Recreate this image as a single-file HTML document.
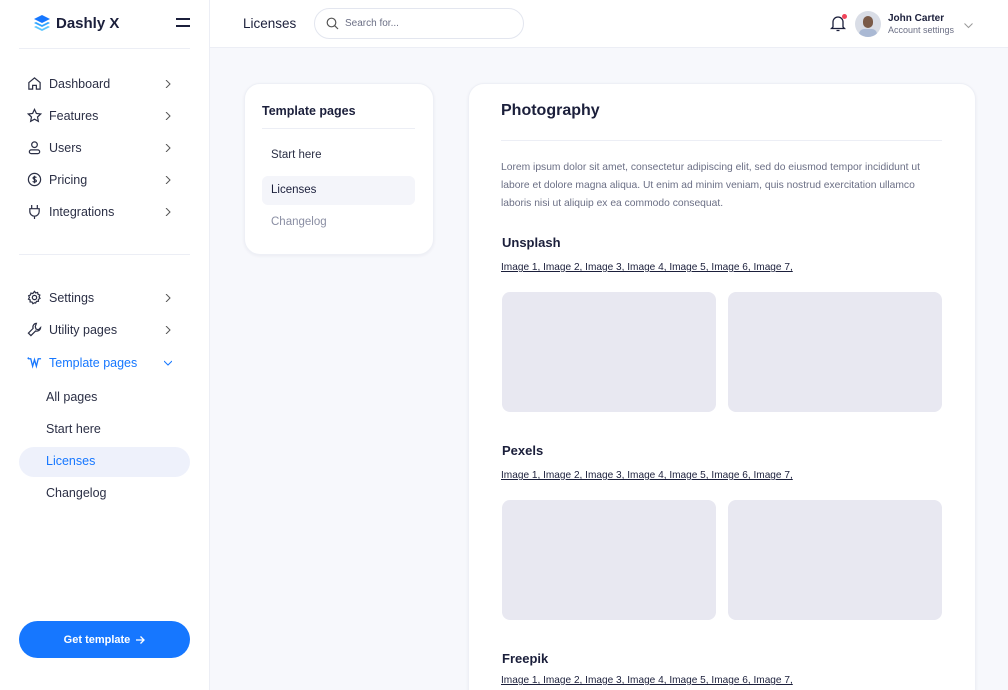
<!DOCTYPE html>
<html style="overflow:hidden;height:690px"><head><meta charset="utf-8"><style>
*{box-sizing:border-box;margin:0;padding:0}
body{width:1008px;height:690px;overflow:hidden;font-family:"Liberation Sans",sans-serif;background:#f7f8fc;color:#1b1f3b;position:relative}
.side{position:absolute;left:0;top:0;width:210px;height:690px;background:#fff;border-right:1px solid #eceef5}
.logo{position:absolute;left:33px;top:14px;display:flex;align-items:center;gap:5px;font-weight:bold;font-size:15px;color:#1b1f3b}
.ham{position:absolute;left:176px;top:18px;width:14px}
.ham i{display:block;height:2px;background:#1b1f3b;margin-bottom:5px}
.hr{position:absolute;left:19px;width:171px;height:1px;background:#eceef5}
.nav{position:absolute;left:27px;display:flex;align-items:center;font-size:12.5px;color:#2b2f45;width:152px}
.nav svg{width:15px;height:15px;margin-right:7px;flex:none}
.nav .ch{position:absolute;right:0;width:8px;height:8px}
.sub{position:absolute;left:46px;font-size:12.5px;color:#2b2f45}
.act{position:absolute;left:19px;top:447px;width:171px;height:30px;background:#eef1fb;border-radius:15px}
.btn{position:absolute;left:19px;top:621px;width:171px;height:37px;background:#1677ff;border-radius:19px;color:#fff;font-size:11px;font-weight:bold;display:flex;align-items:center;justify-content:center;gap:5px}
.top{position:absolute;left:210px;top:0;width:798px;height:48px;background:#fff;border-bottom:1px solid #eceef5}
.card{position:absolute;background:#fff;border-radius:16px;box-shadow:0 1px 3px rgba(30,40,80,.06);border:1px solid #eef0f6}
.img{position:absolute;width:214px;height:120px;background:#e8e8f1;border-radius:8px}
.h3{position:absolute;left:502px;font-size:13px;font-weight:bold}
.links{position:absolute;left:501px;font-size:10.1px;color:#1b1f3b;text-decoration:underline;white-space:nowrap}
</style></head><body>
<div class="side">
 <div class="logo"><svg width="18" height="18" viewBox="0 0 18 18"><path d="M9 1l8 4-8 4-8-4z" fill="#1677ff"/><path d="M1 9l8 4 8-4-2-1-6 3-6-3z" fill="#2fa4ff"/><path d="M1 13l8 4 8-4-2-1-6 3-6-3z" fill="#5bc6ff"/></svg>Dashly X</div>
 <div class="ham"><i></i><i></i></div>
 <div class="hr" style="top:48px"></div>
 <div class="hr" style="top:254px"></div>
 <div class="nav" style="top:76px"><svg viewBox="0 0 16 16" fill="none" stroke="#2b2f45" stroke-width="1.3"><path d="M2 7l6-5 6 5v7h-4v-4H6v4H2z"/></svg>Dashboard<svg class="ch" viewBox="0 0 8 8" fill="none" stroke="#555" stroke-width="1"><path d="M2 0l4 4-4 4"/></svg></div>
 <div class="nav" style="top:108px"><svg viewBox="0 0 16 16" fill="none" stroke="#2b2f45" stroke-width="1.3"><path d="M8 1.5l2 4.3 4.6.6-3.4 3.2.9 4.6L8 12l-4.1 2.2.9-4.6L1.4 6.4 6 5.8z"/></svg>Features<svg class="ch" viewBox="0 0 8 8" fill="none" stroke="#555" stroke-width="1"><path d="M2 0l4 4-4 4"/></svg></div>
 <div class="nav" style="top:140px"><svg viewBox="0 0 16 16" fill="none" stroke="#2b2f45" stroke-width="1.3"><circle cx="8" cy="5" r="3"/><rect x="2.5" y="10.5" width="11" height="4" rx="2"/></svg>Users<svg class="ch" viewBox="0 0 8 8" fill="none" stroke="#555" stroke-width="1"><path d="M2 0l4 4-4 4"/></svg></div>
 <div class="nav" style="top:172px"><svg viewBox="0 0 16 16" fill="none" stroke="#2b2f45" stroke-width="1.3"><circle cx="8" cy="8" r="6.5"/><path d="M10 6c-.5-1-3.5-1-3.5.5S10 8 10 9.5 7 11 6 10M8 4v8"/></svg>Pricing<svg class="ch" viewBox="0 0 8 8" fill="none" stroke="#555" stroke-width="1"><path d="M2 0l4 4-4 4"/></svg></div>
 <div class="nav" style="top:204px"><svg viewBox="0 0 16 16" fill="none" stroke="#2b2f45" stroke-width="1.3"><path d="M5 1v4M11 1v4M3 5h10v3a5 5 0 0 1-10 0zM8 13v3"/></svg>Integrations<svg class="ch" viewBox="0 0 8 8" fill="none" stroke="#555" stroke-width="1"><path d="M2 0l4 4-4 4"/></svg></div>
 <div class="nav" style="top:290px"><svg viewBox="0 0 16 16" fill="none" stroke="#2b2f45" stroke-width="1.3"><circle cx="8" cy="8" r="2.3"/><path d="M8 1.5l1.3 1.6 2-.5.5 2 1.9.8-.8 1.9 1 1.7-1.8 1 .1 2-2 .1-1 1.8L8 13.6l-1.7 1-1-1.8-2-.1.1-2-1.8-1 1-1.7-.8-1.9 1.9-.8.5-2 2 .5z"/></svg>Settings<svg class="ch" viewBox="0 0 8 8" fill="none" stroke="#555" stroke-width="1"><path d="M2 0l4 4-4 4"/></svg></div>
 <div class="nav" style="top:322px"><svg viewBox="0 0 16 16" fill="none" stroke="#2b2f45" stroke-width="1.3"><path d="M10 1.5a4 4 0 0 0-3.5 5.3L1.5 11.8l2.7 2.7 5-5A4 4 0 0 0 14.5 6l-2.3 2.3-2.6-.8-.8-2.6z"/></svg>Utility pages<svg class="ch" viewBox="0 0 8 8" fill="none" stroke="#555" stroke-width="1"><path d="M2 0l4 4-4 4"/></svg></div>
 <div class="nav" style="top:355px;color:#1677ff"><svg viewBox="0 0 16 16" fill="none" stroke="#1677ff" stroke-width="1.4"><path d="M1 4h3l2 8 2-7 2 7 2-8h3M1 4c0-1 1-1 1-1"/></svg>Template pages<svg class="ch" viewBox="0 0 8 8" fill="none" stroke="#1677ff" stroke-width="1"><path d="M0 2l4 4 4-4"/></svg></div>
 <div class="sub" style="top:390px">All pages</div>
 <div class="sub" style="top:422px">Start here</div>
 <div class="act"></div>
 <div class="sub" style="top:454px;color:#1677ff">Licenses</div>
 <div class="sub" style="top:486px">Changelog</div>
 <div class="btn">Get template <svg width="10" height="10" viewBox="0 0 10 10" fill="none" stroke="#fff" stroke-width="1.3"><path d="M1 5h8M5.5 1.5L9 5 5.5 8.5"/></svg></div>
</div>
<div class="top">
 <div style="position:absolute;left:33px;top:16px;font-size:13.5px">Licenses</div>
 <div style="position:absolute;left:104px;top:8px;width:210px;height:31px;border:1px solid #e3e6ef;border-radius:16px;font-size:10px;color:#6b6f85;padding:9px 0 0 30px">
  <svg style="position:absolute;left:11px;top:8px" width="13" height="13" viewBox="0 0 13 13" fill="none" stroke="#555" stroke-width="1.2"><circle cx="5.5" cy="5.5" r="4.3"/><path d="M8.7 8.7L12 12"/></svg>Search for...</div>
 <svg style="position:absolute;left:620px;top:15px" width="16" height="17" viewBox="0 0 16 17" fill="none" stroke="#1b1f3b" stroke-width="1.3"><path d="M3 12V7a5 5 0 0 1 10 0v5l1.5 1.5h-13zM6.5 15.5h3"/></svg>
 <div style="position:absolute;left:632px;top:14px;width:5px;height:5px;border-radius:50%;background:#f0445a"></div>
 <div style="position:absolute;left:645px;top:11px;width:26px;height:26px;border-radius:50%;background:#d9dde6;overflow:hidden"><div style="position:absolute;left:8px;top:5px;width:10px;height:12px;border-radius:5px;background:#7a5a48"></div><div style="position:absolute;left:4px;top:18px;width:18px;height:10px;border-radius:6px;background:#aab9d4"></div></div>
 <div style="position:absolute;left:678px;top:13px;font-size:10px;font-weight:bold">John Carter</div>
 <div style="position:absolute;left:678px;top:25px;font-size:9px;color:#6b6f85">Account settings</div>
 <svg style="position:absolute;left:754px;top:23px" width="9" height="6" viewBox="0 0 9 6" fill="none" stroke="#999" stroke-width="1"><path d="M.5 .5l4 4 4-4"/></svg>
</div>
<div class="card" style="left:244px;top:83px;width:190px;height:172px">
 <div style="position:absolute;left:17px;top:20px;font-size:12.5px;font-weight:bold">Template pages</div>
 <div style="position:absolute;left:17px;top:44px;width:153px;height:1px;background:#eceef5"></div>
 <div style="position:absolute;left:26px;top:65px;font-size:11.5px;color:#2b2f45">Start here</div>
 <div style="position:absolute;left:17px;top:92px;width:153px;height:29px;background:#f4f5fa;border-radius:6px"></div>
 <div style="position:absolute;left:26px;top:100px;font-size:11.5px;color:#1b1f3b">Licenses</div>
 <div style="position:absolute;left:26px;top:132px;font-size:11.5px;color:#8a8ea3">Changelog</div>
</div>
<div class="card" style="left:468px;top:83px;width:508px;height:630px"></div>
<div style="position:absolute;left:501px;top:102px;font-size:16px;font-weight:bold">Photography</div>
<div style="position:absolute;left:501px;top:140px;width:441px;height:1px;background:#eceef5"></div>
<div style="position:absolute;left:501px;top:159px;width:445px;font-size:10.3px;line-height:18px;color:#6b6f85">Lorem ipsum dolor sit amet, consectetur adipiscing elit, sed do eiusmod tempor incididunt ut labore et dolore magna aliqua. Ut enim ad minim veniam, quis nostrud exercitation ullamco laboris nisi ut aliquip ex ea commodo consequat.</div>
<div class="h3" style="top:235px">Unsplash</div>
<div class="links" style="top:262px">Image 1, Image 2, Image 3, Image 4, Image 5, Image 6, Image 7,</div>
<div class="img" style="left:502px;top:292px"></div><div class="img" style="left:728px;top:292px"></div>
<div class="h3" style="top:443px">Pexels</div>
<div class="links" style="top:470px">Image 1, Image 2, Image 3, Image 4, Image 5, Image 6, Image 7,</div>
<div class="img" style="left:502px;top:500px"></div><div class="img" style="left:728px;top:500px"></div>
<div class="h3" style="top:651px">Freepik</div>
<div class="links" style="top:675px">Image 1, Image 2, Image 3, Image 4, Image 5, Image 6, Image 7,</div>
</body></html>
